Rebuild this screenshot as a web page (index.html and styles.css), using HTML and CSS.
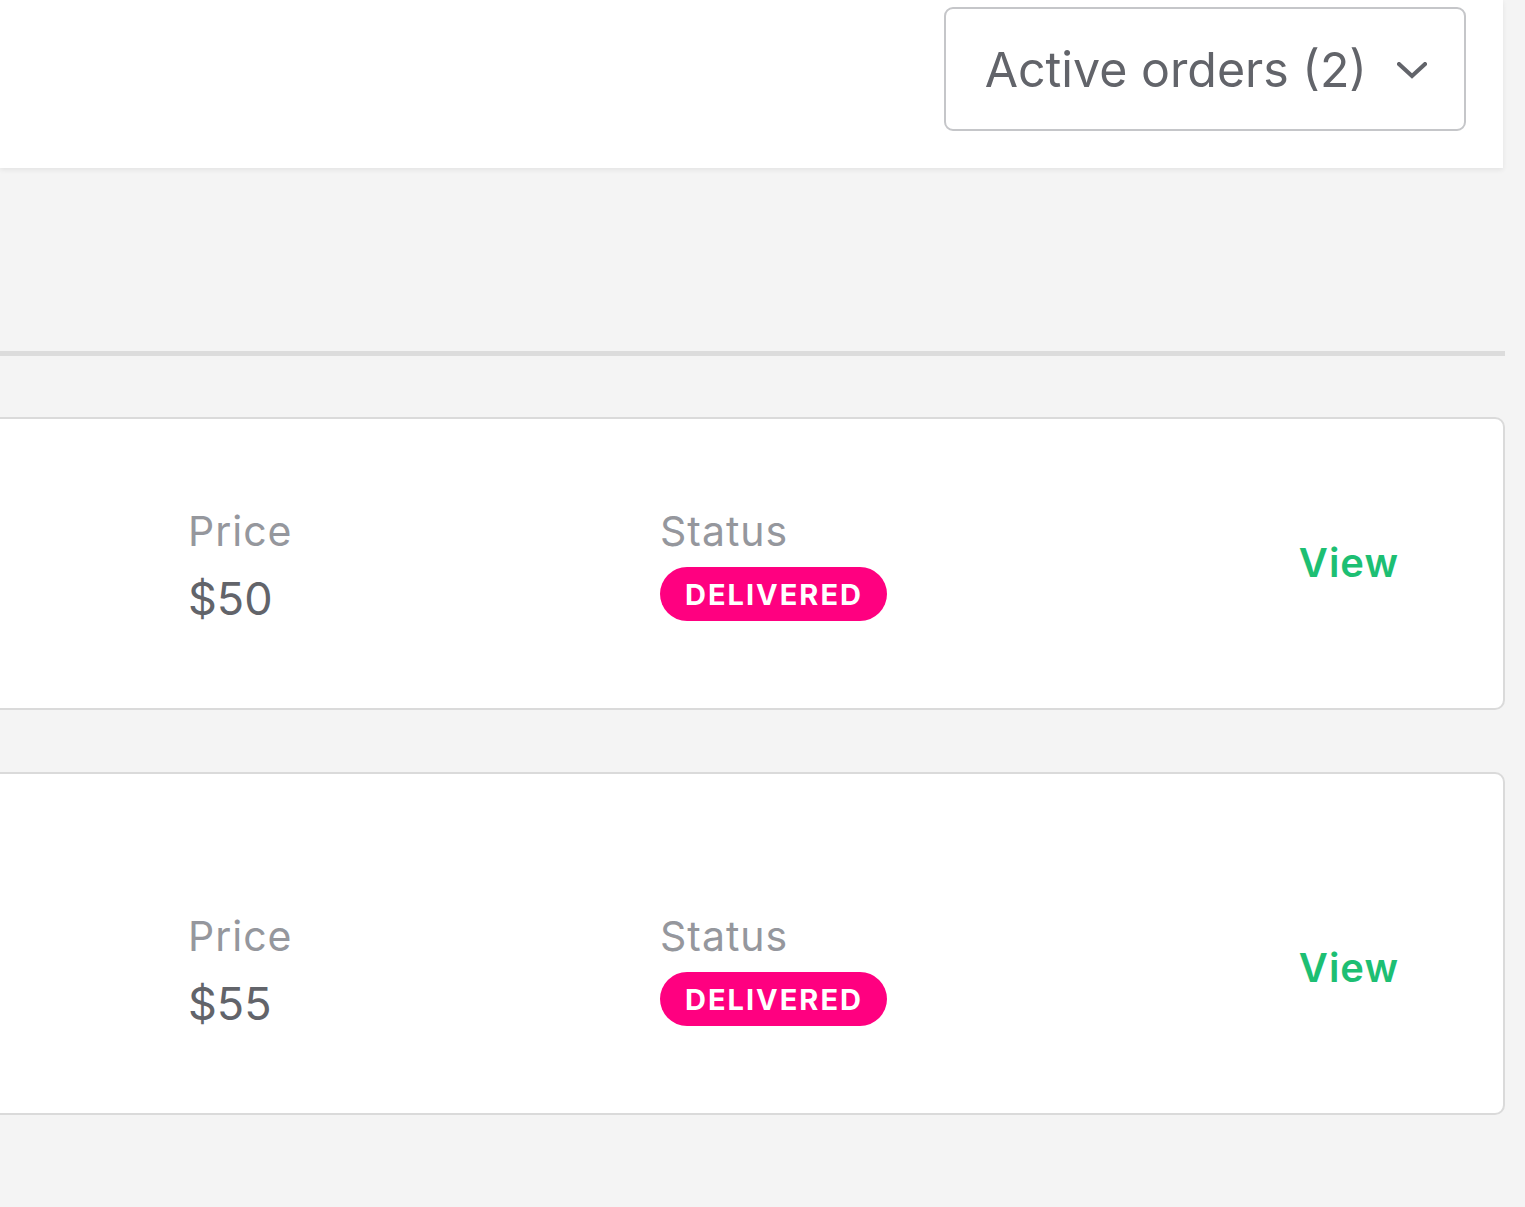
FILE: index.html
```html
<!DOCTYPE html>
<html lang="en">
<head>
  <meta charset="UTF-8">
  <meta name="viewport" content="width=device-width, initial-scale=1.0">
  <title>Orders</title>
  <link rel="stylesheet" href="styles.css">
</head>
<body>
  <header class="topbar">
    <button class="orders-select" type="button">
      <span>Active orders (2)</span>
      <svg class="chevron" width="30" height="17" viewBox="0 0 30 17" aria-hidden="true">
        <path d="M2 2 L15 14 L28 2" fill="none" stroke="#62646a" stroke-width="4" stroke-linecap="square"/>
      </svg>
    </button>
  </header>

  <main class="orders">
    <div class="orders-divider"></div>

    <div class="order-card">
      <div class="order-col price-col">
        <div class="col-label">Price</div>
        <div class="col-value">$50</div>
      </div>
      <div class="order-col status-col">
        <div class="col-label">Status</div>
        <span class="status-badge">DELIVERED</span>
      </div>
      <a href="#" class="view-link">View</a>
    </div>

    <div class="order-card tall">
      <div class="order-col price-col">
        <div class="col-label">Price</div>
        <div class="col-value">$55</div>
      </div>
      <div class="order-col status-col">
        <div class="col-label">Status</div>
        <span class="status-badge">DELIVERED</span>
      </div>
      <a href="#" class="view-link">View</a>
    </div>
  </main>
</body>
</html>
```

FILE: styles.css
```css
:root {
  --bg-page: #f4f4f4;
  --border: #dcdcdc;
  --text-main: #62646a;
  --text-muted: #95979d;
  --green: #1dbf73;
  --pink: #ff0080;
}
* { box-sizing: border-box; margin: 0; padding: 0; }
body {
  font-family: Inter, "Open Sans", Arial, sans-serif;
  background: var(--bg-page);
  color: var(--text-main);
}
.topbar {
  background: #fff;
  margin-right: 22px;
  padding: 7px 37px 37px 0;
  display: flex;
  justify-content: flex-end;
  box-shadow: 0 2px 5px rgba(0,0,0,0.07);
}
.orders-select {
  display: flex;
  align-items: center;
  gap: 30px;
  height: 124px;
  padding: 0 37px 0 39px;
  background: #fff;
  border: 2px solid #c5c6c9;
  border-radius: 9px;
  font-family: inherit;
  font-size: 48.3px;
  color: var(--text-main);
  cursor: pointer;
}
.chevron {
  display: block;
  margin-top: 2px;
}
.orders {
  margin: 0 20px 0 -40px;
  padding-top: 183px;
}
.orders-divider {
  height: 5px;
  background: var(--border);
  margin-bottom: 61px;
}
.order-card {
  display: flex;
  align-items: flex-start;
  background: #fff;
  border: 2px solid #dadada;
  border-radius: 10px;
  padding: 88px 104px 82px 226px;
  margin-bottom: 62px;
}
.order-card.tall {
  padding-top: 138px;
}
.order-col {
  display: flex;
  flex-direction: column;
  align-items: flex-start;
}
.price-col {
  width: 472px;
}
.status-col {
  flex: 1;
}
.col-label {
  font-size: 41px;
  line-height: 48px;
  letter-spacing: 1px;
  color: var(--text-muted);
}
.col-value {
  font-size: 45px;
  line-height: 54px;
  margin-top: 17px;
  color: var(--text-main);
}
.status-badge {
  margin-top: 12px;
  height: 54px;
  display: inline-flex;
  align-items: center;
  padding: 0 24px 0 25px;
  border-radius: 27px;
  background: var(--pink);
  color: #fff;
  font-size: 29px;
  font-weight: 700;
  letter-spacing: 2px;
}
.view-link {
  align-self: center;
  margin-bottom: 8px;
  font-size: 40px;
  line-height: 48px;
  font-weight: 600;
  letter-spacing: 1px;
  color: var(--green);
  text-decoration: none;
}
```
